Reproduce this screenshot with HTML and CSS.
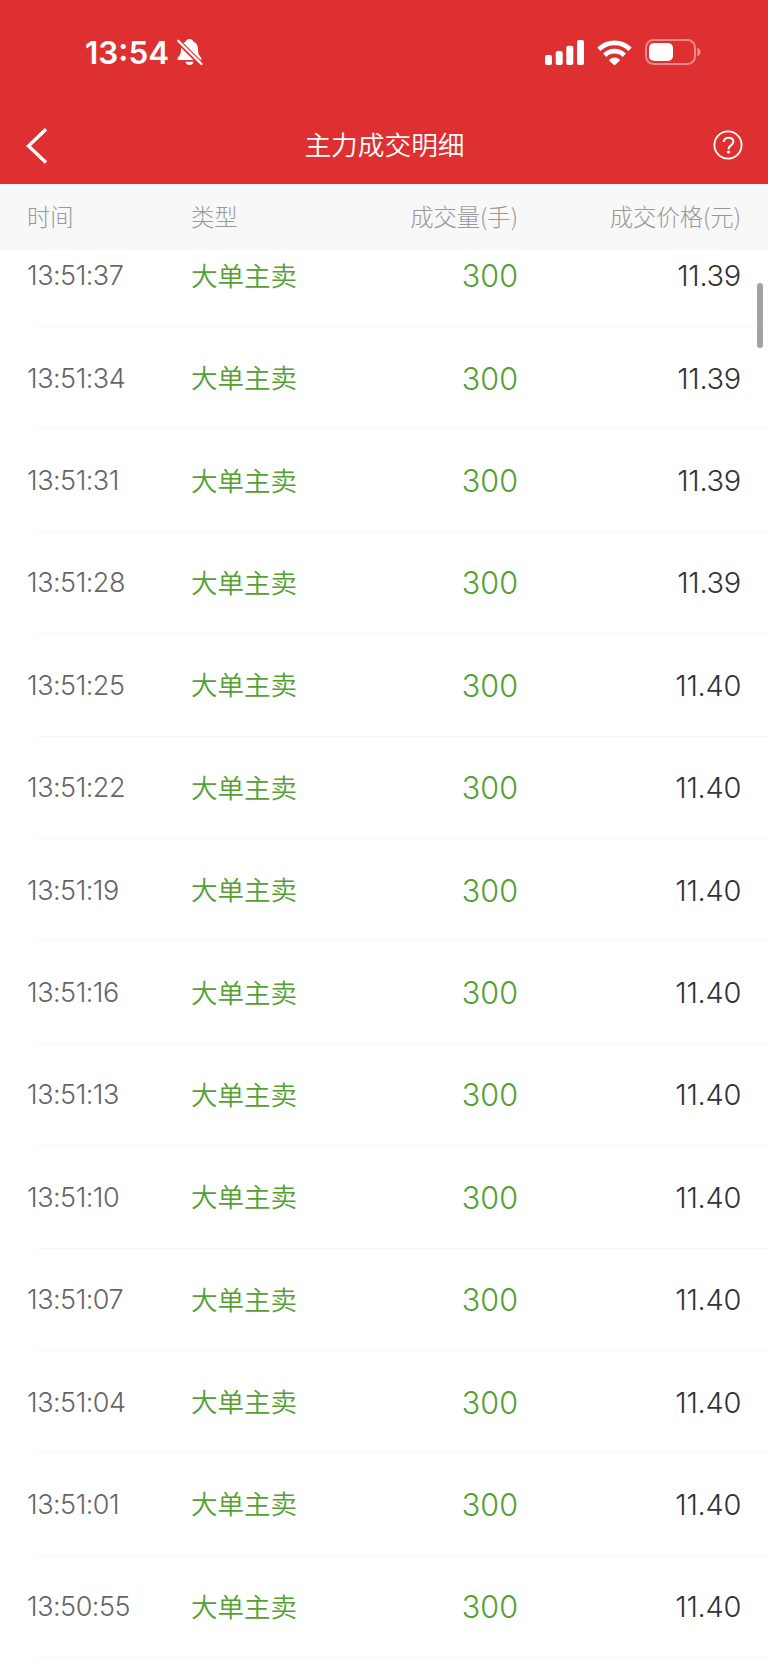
FILE: index.html
```html
<!DOCTYPE html>
<html lang="zh-CN">
  <head>
    <meta charset="UTF-8" />
    <meta name="viewport" content="width=device-width, initial-scale=1.0" />
    <title>主力成交明细</title>
    <link rel="stylesheet" href="styles.css">
  </head>

  <body>
    <header class="header">
      <div class="status-bar">
        <div class="status-left">
          <span class="clock">13:54</span>
          <svg class="bell" viewBox="0 0 27 28" width="27" height="28">
            <path fill="#fff" d="M13.5 1c-2 0-3.3 1.1-3.7 2.4C6.300 4.800 5 7.600 5 11c0 5-1.300 6.700-3 8.500-1 1.100-.6 2.500.9 2.500h21.200c1.500 0 1.900-1.400.9-2.500-1.700-1.800-3-3.500-3-8.500 0-3.400-1.300-6.200-4.800-7.600C16.800 2.100 15.500 1 13.500 1zM9.500 23.700h8c-.4 2-2 3.300-4 3.300s-3.600-1.300-4-3.300z" />
            <path stroke="#de3030" stroke-width="5" d="M-1 0l28 28" />
            <path stroke="#fff" stroke-width="2.200" stroke-linecap="round" d="M2.200 2.700l23.300 23.300" />
          </svg>
        </div>
        <div class="status-right">
          <svg class="signal" viewBox="0 0 39 25" width="39" height="25" fill="#fff">
            <rect x="0" y="15" width="7" height="10" rx="2" />
            <rect x="10.700" y="11" width="7" height="14" rx="2" />
            <rect x="21.300" y="5.700" width="7" height="19.300" rx="2" />
            <rect x="32" y="0" width="7" height="25" rx="2" />
          </svg>
          <svg class="wifi" viewBox="0 0 35 25" width="35" height="25">
            <g fill="none" stroke="#fff" stroke-width="4.700">
              <path d="M1.900 9.200a22.300 22.300 0 0 1 31.200 0" />
              <path d="M7.700 15.200a14 14 0 0 1 19.600 0" />
            </g>
            <path fill="#fff" d="M12.400 19.500a7.500 7.500 0 0 1 10.200 0q.6.6 0 1.200l-4.300 4q-.8.700-1.600 0l-4.300-4q-.6-.6 0-1.200z" />
          </svg>
          <svg class="battery" viewBox="0 0 56 26" width="56" height="26">
            <rect x="1" y="1" width="49" height="24" rx="7.500" fill="none" stroke="#fff" stroke-opacity=".43" stroke-width="2" />
            <rect x="4" y="4" width="24" height="18" rx="5" fill="#fff" />
            <path d="M52.300 8.700c2 .8 3.200 2.400 3.200 4.300s-1.200 3.500-3.200 4.300z" fill="#fff" fill-opacity=".48" />
          </svg>
        </div>
      </div>

      <div class="nav-bar">
        <svg class="back" viewBox="0 0 22 36" width="22" height="36">
          <path fill="none" stroke="#fff" stroke-width="3.400" d="M20 1.200L2.500 18L20 34.500" />
        </svg>
        <h1>主力成交明细</h1>
        <svg class="help" viewBox="0 0 30 30" width="30" height="30" fill="none" stroke="#fff" stroke-width="1.800">
          <circle cx="15" cy="15" r="13.600" />
          <path stroke-width="2" d="M10.700 12.100c0-2.700 1.900-4.400 4.800-4.400s4.800 1.600 4.800 4c0 1.900-1 2.800-2.600 3.900-1.600 1-2.200 1.800-2.200 3.600" />
          <circle cx="15.500" cy="22" r="1.600" fill="#fff" stroke="none" />
        </svg>
      </div>
    </header>

    <div class="row table-head">
      <span class="time">时间</span>
      <span class="type">类型</span>
      <span class="volume">成交量(手)</span>
      <span class="price">成交价格(元)</span>
    </div>

    <main class="list">
      <div class="rows"></div>
      <div class="scrollbar"></div>
    </main>

    <script src="script.js"></script>
  </body>
</html>
```

FILE: styles.css
```css
* {
  margin: 0;
  padding: 0;
  box-sizing: border-box;
}

body {
  display: flex;
  flex-direction: column;
  height: 100vh;
  overflow: hidden;
  background-color: #fff;
  font-family: Inter, "Noto Sans CJK SC", sans-serif;
  font-weight: 300;
}

svg {
  display: block;
  flex-shrink: 0;
}

.header {
  flex-shrink: 0;
  height: 184px;
  background-color: #de3030;
  color: #fff;
}

.status-bar {
  display: flex;
  justify-content: space-between;
  height: 106px;
  padding: 0 67px 0 85px;
}

.status-left,
.status-right {
  display: flex;
  align-items: center;
  height: 104px;
}

.clock {
  width: 84px;
  font-size: 31.5px;
  font-weight: 600;
  white-space: nowrap;
}

.bell {
  margin-left: 7px;
}

.wifi {
  margin-left: 13px;
}

.battery {
  margin-left: 13px;
}

.nav-bar {
  display: flex;
  align-items: center;
  justify-content: space-between;
  height: 78px;
  padding: 0 25px 0 26px;
}

.nav-bar h1 {
  padding-left: 8px;
  font-size: 26.7px;
  font-weight: 350;
  line-height: 40px;
}

.back {
  margin-top: 1px;
}

.row {
  display: grid;
  grid-template-columns: 164px 160px 167px 223px;
  align-items: center;
  padding: 0 27px;
}

.table-head {
  flex-shrink: 0;
  height: 66px;
  padding-bottom: 3px;
  background-color: #f8f8f8;
  color: #999;
  font-size: 23.3px;
  font-family: "Noto Sans CJK SC", sans-serif;
}

.volume,
.price {
  text-align: right;
}

.list {
  position: relative;
  flex: 1;
  min-height: 0;
  overflow: hidden;
}

/* scrolled a little, the first row is partly under the head */
.rows {
  margin-top: -25.4px;
}

.record {
  height: 102.4px;
  background: linear-gradient(#f7f7f9, #f7f7f9) 36px 100% / 100% 1px no-repeat;
}

.record .time {
  color: #666;
  font-size: 27px;
  letter-spacing: -0.5px;
}

.record .type {
  padding-bottom: 3px;
  color: #54a032;
  font-size: 26.5px;
  font-weight: 350;
}

.record .volume {
  color: #54a032;
  font-size: 30.5px;
}

.record .price {
  color: #333;
  font-size: 29px;
  letter-spacing: -0.3px;
}

.scrollbar {
  position: absolute;
  top: 33px;
  right: 5px;
  width: 6px;
  height: 65px;
  border-radius: 3px;
  background-color: #a3a3a3;
}
```

FILE: script.js
```js
const records = [
  ["13:51:37", "11.39"],
  ["13:51:34", "11.39"],
  ["13:51:31", "11.39"],
  ["13:51:28", "11.39"],
  ["13:51:25", "11.40"],
  ["13:51:22", "11.40"],
  ["13:51:19", "11.40"],
  ["13:51:16", "11.40"],
  ["13:51:13", "11.40"],
  ["13:51:10", "11.40"],
  ["13:51:07", "11.40"],
  ["13:51:04", "11.40"],
  ["13:51:01", "11.40"],
  ["13:50:55", "11.40"],
];

document.querySelector(".rows").innerHTML = records
  .map(
    ([time, price]) => `
      <div class="row record">
        <span class="time">${time}</span>
        <span class="type">大单主卖</span>
        <span class="volume">300</span>
        <span class="price">${price}</span>
      </div>`
  )
  .join("");
```
